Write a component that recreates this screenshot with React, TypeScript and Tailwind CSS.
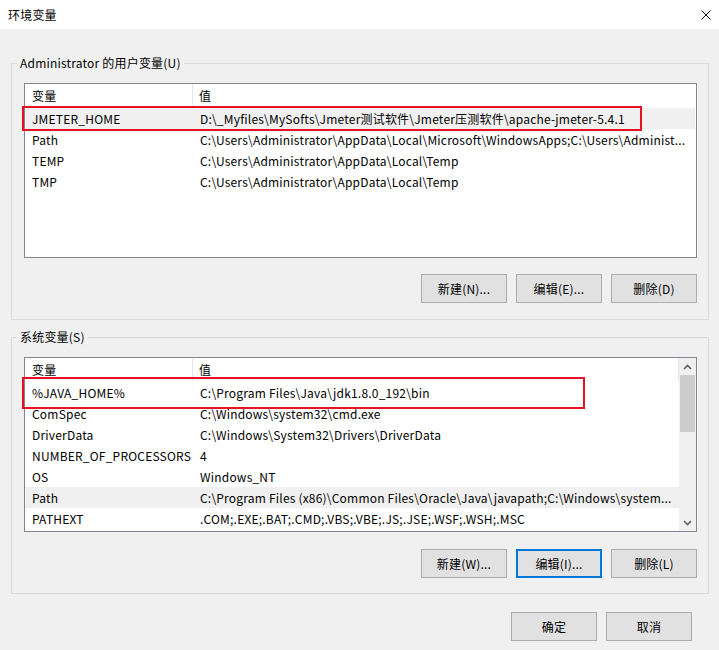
import React from 'react';

type Row = {
  name: string;
  value: string;
  shaded?: boolean;
  mark?: 'user' | 'system';
};

const USER_VARS: Row[] = [
  {
    name: 'JMETER_HOME',
    value: 'D:\\_Myfiles\\MySofts\\Jmeter测试软件\\Jmeter压测软件\\apache-jmeter-5.4.1',
    shaded: true,
    mark: 'user',
  },
  {
    name: 'Path',
    value: 'C:\\Users\\Administrator\\AppData\\Local\\Microsoft\\WindowsApps;C:\\Users\\Administ...',
  },
  { name: 'TEMP', value: 'C:\\Users\\Administrator\\AppData\\Local\\Temp' },
  { name: 'TMP', value: 'C:\\Users\\Administrator\\AppData\\Local\\Temp' },
];

const SYSTEM_VARS: Row[] = [
  { name: '%JAVA_HOME%', value: 'C:\\Program Files\\Java\\jdk1.8.0_192\\bin', mark: 'system' },
  { name: 'ComSpec', value: 'C:\\Windows\\system32\\cmd.exe' },
  { name: 'DriverData', value: 'C:\\Windows\\System32\\Drivers\\DriverData' },
  { name: 'NUMBER_OF_PROCESSORS', value: '4' },
  { name: 'OS', value: 'Windows_NT' },
  {
    name: 'Path',
    value: 'C:\\Program Files (x86)\\Common Files\\Oracle\\Java\\javapath;C:\\Windows\\system...',
    shaded: true,
  },
  { name: 'PATHEXT', value: '.COM;.EXE;.BAT;.CMD;.VBS;.VBE;.JS;.JSE;.WSF;.WSH;.MSC' },
];

const Chevron: React.FC<{ down?: boolean }> = ({ down }) => (
  <svg width="9" height="6" viewBox="0 0 9 6">
    <polyline
      points={down ? '1,1 4.5,4.5 8,1' : '1,5 4.5,1.5 8,5'}
      fill="none"
      stroke="#606060"
      strokeWidth="1.6"
    />
  </svg>
);

const Button: React.FC<{ label: string; focused?: boolean }> = ({ label, focused }) => (
  <button
    className={`w-[86px] h-[29px] bg-[#e1e1e1] flex items-center justify-center text-[12px] text-black ${
      focused ? 'border-2 border-[#0078d7]' : 'border border-[#adadad]'
    }`}
  >
    {label}
  </button>
);

const VarList: React.FC<{ rows: Row[]; scroll?: boolean }> = ({ rows, scroll }) => (
  <div className="relative h-[175px] border border-[#828790] bg-white flex">
    <div className="flex-1 min-w-0 flex flex-col">
      {/* header */}
      <div className={`h-[23px] flex shrink-0 ${scroll ? 'border-r border-[#e5e5e5]' : ''}`}>
        <div className="w-[168px] pl-[7px] flex items-center border-r border-[#e5e5e5]">变量</div>
        <div className="flex-1 pl-[6px] flex items-center">值</div>
      </div>
      {rows.map((row, i) => (
        <div
          key={row.name}
          className={`relative h-[21px] flex shrink-0 items-center ${i === 0 ? 'mt-[1px]' : ''} ${
            row.shaded ? (scroll ? 'bg-[#f0f0f0]' : 'bg-[#f0f0f0] mr-[1px]') : ''
          }`}
        >
          <div className="w-[168px] pl-[7px] whitespace-nowrap overflow-hidden">{row.name}</div>
          <div className="flex-1 pl-[7px] whitespace-nowrap overflow-hidden">{row.value}</div>
          {row.mark === 'user' && (
            <div className="absolute left-[-3px] top-[-2px] w-[620px] h-[25px] border-2 border-[#e81123]" />
          )}
          {row.mark === 'system' && (
            <div className="absolute left-[-3px] top-[-5px] w-[563px] h-[32px] border-2 border-[#e81123]" />
          )}
        </div>
      ))}
    </div>
    {scroll && (
      <div className="w-[17px] bg-[#f0f0f0] flex flex-col">
        <div className="h-[17px] flex items-center justify-center">
          <Chevron />
        </div>
        <div className="h-[57px] mx-[1px] bg-[#cdcdcd]" />
        <div className="flex-1" />
        <div className="h-[17px] flex items-center justify-center">
          <Chevron down />
        </div>
      </div>
    )}
  </div>
);

export default function App() {
  return (
    <div className="w-[719px] h-[650px] overflow-hidden bg-[#f0f0f0] text-[12px] leading-[16px] tracking-[0.2px] text-black font-['Noto_Sans_CJK_SC',sans-serif]">
      {/* title bar */}
      <div className="h-[29px] bg-white flex items-center justify-between pl-[8px] pr-[8px]">
        <span>环境变量</span>
        <svg width="10" height="10" viewBox="0 0 10 10">
          <path d="M0.5 0.5 L9.5 9.5 M9.5 0.5 L0.5 9.5" stroke="#111" strokeWidth="1" />
        </svg>
      </div>

      <div className="pl-[11px] pt-[26px]">
        <fieldset className="w-[698px] border border-[#dcdcdc] pl-[12px] pr-[11px] pt-[12px] pb-[16px]">
          <legend className="ml-[-7px] px-[3px] leading-[16px]">Administrator 的用户变量(U)</legend>
          <VarList rows={USER_VARS} />
          <div className="mt-[16px] flex justify-end gap-[9px]">
            <Button label="新建(N)..." />
            <Button label="编辑(E)..." />
            <Button label="删除(D)" />
          </div>
        </fieldset>

        <fieldset className="mt-[9px] w-[698px] border border-[#dcdcdc] pl-[12px] pr-[11px] pt-[12px] pb-[15px]">
          <legend className="ml-[-7px] px-[3px] leading-[16px]">系统变量(S)</legend>
          <VarList rows={SYSTEM_VARS} scroll />
          <div className="mt-[17px] flex justify-end gap-[9px]">
            <Button label="新建(W)..." />
            <Button label="编辑(I)..." focused />
            <Button label="删除(L)" />
          </div>
        </fieldset>
      </div>

      <div className="mt-[18px] pr-[27px] flex justify-end gap-[9px]">
        <Button label="确定" />
        <Button label="取消" />
      </div>
    </div>
  );
}
